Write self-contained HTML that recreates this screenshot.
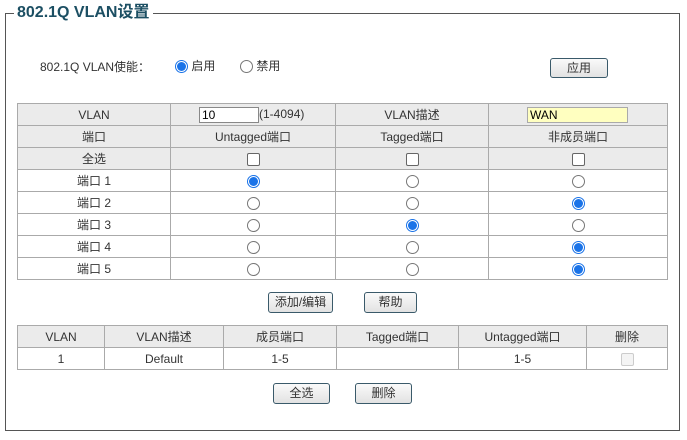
<!DOCTYPE html>
<html><head><meta charset="utf-8"><style>
*{box-sizing:border-box;margin:0;padding:0}
body{width:687px;height:440px;background:#fff;position:relative;font-family:"Liberation Sans","Noto Sans CJK SC",sans-serif;font-size:12px;color:#333;overflow:hidden}
.fs{position:absolute;left:5px;top:13px;width:675px;height:418px;border:1px solid #555}
.title{position:absolute;left:14px;top:3px;background:#fff;padding:0 3px;font-size:16px;font-weight:bold;color:#1c4f63;line-height:19px}
.abs{position:absolute}
table{position:absolute;border-collapse:collapse;table-layout:fixed}
td{border:1px solid #aaa;text-align:center;height:22px;padding:0;font-size:12px;color:#333;position:relative}
.g td{background:#ebebeb}
.r{display:inline-block;width:13px;height:13px;border:1px solid #777;border-radius:50%;vertical-align:middle;background:#fff;position:relative}
.r.on{border:1px solid #1a73e8}
.r.on:after{content:"";position:absolute;left:1px;top:1px;width:9px;height:9px;border-radius:50%;background:#1a73e8}
.c{display:inline-block;width:13px;height:13px;border:1px solid #666;border-radius:2px;background:#fff;vertical-align:middle}
.btn{position:absolute;border:1px solid #3a5a6a;border-radius:3px;background:linear-gradient(#fafafa,#e2e2e2);font-size:12px;text-align:center;line-height:18px;color:#333}
</style></head><body>
<div class="fs"></div>
<div class="title">802.1Q VLAN设置</div>
<div class="abs" style="left:40px;top:59px;line-height:16px">802.1Q VLAN使能：</div>
<div class="abs" style="left:175px;top:58px;line-height:16px"><span class="r on"></span> 启用</div>
<div class="abs" style="left:240px;top:58px;line-height:16px"><span class="r"></span> 禁用</div>
<div class="btn" style="left:550px;top:58px;width:58px;height:20px">应用</div>

<table style="left:17px;top:103px;width:650px">
<colgroup><col style="width:153px"><col style="width:165px"><col style="width:153px"><col style="width:179px"></colgroup>
<tr class="g"><td>VLAN</td><td style="text-align:left;padding-left:28px"><span style="display:inline-block;width:60px;height:16px;border:1px solid #888;background:#fff;text-align:left;padding-left:2px;line-height:14px;vertical-align:middle;color:#000">10</span>(1-4094)</td><td>VLAN描述</td><td style="text-align:left;padding-left:38px"><span style="display:inline-block;width:101px;height:16px;border:1px solid #aaa;background:#ffffc0;text-align:left;padding-left:2px;line-height:14px;vertical-align:middle;color:#000">WAN</span></td></tr>
<tr class="g"><td>端口</td><td>Untagged端口</td><td>Tagged端口</td><td>非成员端口</td></tr>
<tr class="g"><td>全选</td><td><span class="c"></span></td><td><span class="c"></span></td><td><span class="c"></span></td></tr>
<tr><td>端口 1</td><td><span class="r on"></span></td><td><span class="r"></span></td><td><span class="r"></span></td></tr>
<tr><td>端口 2</td><td><span class="r"></span></td><td><span class="r"></span></td><td><span class="r on"></span></td></tr>
<tr><td>端口 3</td><td><span class="r"></span></td><td><span class="r on"></span></td><td><span class="r"></span></td></tr>
<tr><td>端口 4</td><td><span class="r"></span></td><td><span class="r"></span></td><td><span class="r on"></span></td></tr>
<tr><td>端口 5</td><td><span class="r"></span></td><td><span class="r"></span></td><td><span class="r on"></span></td></tr>
</table>

<div class="btn" style="left:268px;top:292px;width:65px;height:21px">添加/编辑</div>
<div class="btn" style="left:364px;top:292px;width:53px;height:21px">帮助</div>

<table style="left:17px;top:325px;width:650px">
<colgroup><col style="width:87px"><col style="width:119px"><col style="width:113px"><col style="width:122px"><col style="width:128px"><col style="width:81px"></colgroup>
<tr class="g"><td>VLAN</td><td>VLAN描述</td><td>成员端口</td><td>Tagged端口</td><td>Untagged端口</td><td>删除</td></tr>
<tr><td>1</td><td>Default</td><td>1-5</td><td></td><td>1-5</td><td><span class="c" style="border-color:#ccc;background:#f4f4f4;vertical-align:top;margin-top:2px"></span></td></tr>
</table>

<div class="btn" style="left:273px;top:383px;width:57px;height:21px">全选</div>
<div class="btn" style="left:355px;top:383px;width:57px;height:21px">删除</div>
</body></html>
